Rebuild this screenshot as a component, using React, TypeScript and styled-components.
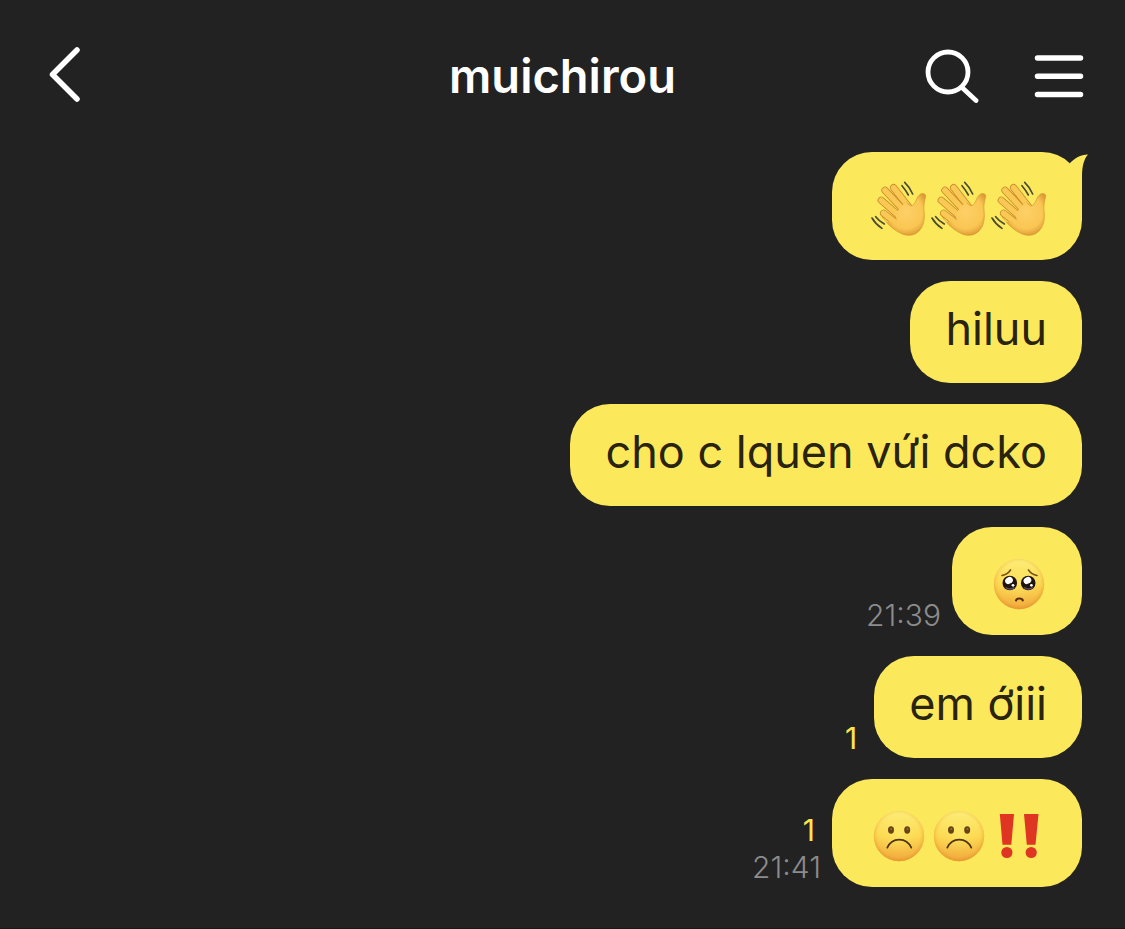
import React from "react";
import styled, { createGlobalStyle } from "styled-components";

const GlobalStyle = createGlobalStyle`
  * { box-sizing: border-box; }
  body { margin: 0; background: #222222; }
`;

const Screen = styled.main`
  min-height: 100vh;
  background: #222222;
  color: #ffffff;
  font-family: Inter, "Liberation Sans", sans-serif;
  border-bottom: 1px solid #1a1718;
`;

const Header = styled.header`
  display: grid;
  grid-template-columns: 1fr auto 1fr;
  align-items: center;
  height: 152px;
  padding: 0 40px;
`;

const Title = styled.h1`
  margin: 0;
  font-size: 47px;
  line-height: 60px;
  font-weight: 600;
`;

const Actions = styled.div`
  display: flex;
  justify-content: flex-end;
  gap: 46px;
`;

const IconButton = styled.button`
  display: block;
  padding: 0;
  border: 0;
  background: none;
  color: #ffffff;
  cursor: pointer;
  justify-self: start;

  svg { display: block; }
`;

const Messages = styled.ol`
  display: flex;
  flex-direction: column;
  gap: 21px;
  margin: 0;
  padding: 0 43px 38px;
  list-style: none;
`;

const Row = styled.li`
  display: flex;
  justify-content: flex-end;
  align-items: flex-end;
  gap: 11px;
`;

const Meta = styled.div`
  display: flex;
  flex-direction: column;
  align-items: flex-end;
  padding-bottom: 1px;
  font-size: 30px;
  line-height: 37px;
  font-weight: 300;
`;

const Unread = styled.span`
  padding-right: 6px;
  color: #fbe54f;
  font-weight: 400;
`;

const Time = styled.time`
  color: #8c8c8c;
`;

const Bubble = styled.div<{ $emoji?: boolean }>`
  position: relative;
  display: flex;
  padding: ${(p) => (p.$emoji ? "24px 35px" : "22px 35px 28px")};
  border-radius: 40px;
  background: #fbe95b;
  color: #29230f;
  font-size: 45px;
  line-height: 52px;
  font-weight: 400;
`;

const Tail = styled.svg`
  position: absolute;
  top: 0;
  right: -6px;
`;

const EmojiSvg = styled.svg`
  display: block;
  width: 60px;
  height: 60px;
`;

const HiddenDefs = styled.svg`
  position: absolute;
`;

const Defs = () => (
  <HiddenDefs width="0" height="0" aria-hidden="true">
    <defs>
      <linearGradient id="face" x1="0" y1="0" x2="0" y2="1">
        <stop offset="0" stopColor="#fdf07c" />
        <stop offset="0.5" stopColor="#fcd951" />
        <stop offset="1" stopColor="#f0a23a" />
      </linearGradient>
      <radialGradient id="shine" cx="0.5" cy="0.47" r="0.54">
        <stop offset="0" stopColor="#fff070" stopOpacity="0.55" />
        <stop offset="0.72" stopColor="#fddf5a" stopOpacity="0.1" />
        <stop offset="0.9" stopColor="#e9a032" stopOpacity="0.4" />
        <stop offset="1" stopColor="#dc8f2a" stopOpacity="0.75" />
      </radialGradient>
      <radialGradient id="palm" gradientUnits="userSpaceOnUse" cx="138" cy="126" r="72">
        <stop offset="0" stopColor="#fdd067" />
        <stop offset="0.7" stopColor="#fac653" />
        <stop offset="1" stopColor="#dd9a35" />
      </radialGradient>
    </defs>
  </HiddenDefs>
);

const fingers = [
  "M101 53L150 116",
  "M75 61L135 125",
  "M64 91L120 140",
  "M71 130L112 162",
];

const Wave = () => (
  <EmojiSvg viewBox="21 18 180 180" role="img" aria-label="👋">
    {fingers.map((d) => (
      <g key={d} fill="none" strokeLinecap="round">
        <path d={d} stroke="#c98a2c" strokeWidth="22" />
        <path d={d} stroke="#fac854" strokeWidth="17" />
      </g>
    ))}
    <path
      d="M110 150L106 132L126 106L140 98C151 110 158 109 163 101C170 91 170 81 179 74C187 68 198 71 197 79C194 93 190 105 192 121C195 150 190 170 177 183C162 198 143 199 125 191C108 184 92 172 78 156Z"
      fill="url(#palm)"
    />
    <path
      d="M140 98C151 110 158 109 163 101C170 91 170 81 179 74C187 68 198 71 197 79C194 93 190 105 192 121C195 150 190 170 177 183C162 198 143 199 125 191C108 184 92 172 66 141"
      fill="none"
      stroke="#d39332"
      strokeWidth="2"
    />
    <path
      d="M126 47Q137 60 145 75M134 37Q149 51 158 72M47 140Q57 153 73 162M36 144Q47 163 66 175"
      fill="none"
      stroke="#4a4a35"
      strokeWidth="5"
      strokeLinecap="round"
    />
  </EmojiSvg>
);

const Face = () => (
  <>
    <circle cx="32" cy="33" r="25.2" fill="url(#face)" />
    <circle cx="32" cy="33" r="25.2" fill="url(#shine)" />
  </>
);

const Frown = () => (
  <EmojiSvg viewBox="0 0 60 60" role="img" aria-label="☹️">
    <Face />
    <ellipse cx="24" cy="27" rx="3" ry="3.7" fill="#674315" />
    <ellipse cx="40.2" cy="27" rx="3" ry="3.7" fill="#674315" />
    <circle cx="24.3" cy="26" r="1" fill="#93703c" />
    <circle cx="40.5" cy="26" r="1" fill="#93703c" />
    <path d="M20.3 44.7C25 33.8 39.5 33.8 44.3 44.7" fill="none" stroke="#4f3410" strokeWidth="1.7" strokeLinecap="round" />
  </EmojiSvg>
);

const Pleading = () => (
  <EmojiSvg viewBox="0 0 60 60" role="img" aria-label="🥺">
    <Face />
    <path d="M15 24.5Q20.5 23.5 23.5 19M41.5 19Q44.5 23.5 50 24.5" fill="none" stroke="#7b4c16" strokeWidth="1.6" strokeLinecap="round" />
    <circle cx="22.8" cy="32" r="7.3" fill="#20140f" />
    <circle cx="41.2" cy="32" r="7.3" fill="#20140f" />
    <path d="M18.5 36.500Q23 39.5 27.5 36.5M37 36.5Q41.5 39.5 46 36.5" fill="none" stroke="#5b5168" strokeWidth="1.3" />
    <ellipse cx="22" cy="29.5" rx="4" ry="3.3" transform="rotate(-30 22 29.5)" fill="#ffffff" />
    <ellipse cx="40.4" cy="29.5" rx="4" ry="3.3" transform="rotate(-30 40.4 29.5)" fill="#ffffff" />
    <circle cx="26" cy="34.3" r="1.4" fill="#ffffff" />
    <circle cx="44.4" cy="34.3" r="1.4" fill="#ffffff" />
    <path d="M29 49.5C29.5 46.8 35.3 46.8 35.8 49.5" fill="none" stroke="#582c0c" strokeWidth="2.1" strokeLinecap="round" />
  </EmojiSvg>
);

const Bangs = () => (
  <EmojiSvg viewBox="0 0 60 60" role="img" aria-label="‼️">
    <path d="M12.8 11H27L24.3 41.8H15.5ZM37 11H51.5L48.5 41.8H39.8Z" fill="#df3523" />
    <circle cx="19.9" cy="49.5" r="5.6" fill="#df3523" />
    <circle cx="44.2" cy="49.5" r="5.6" fill="#df3523" />
  </EmojiSvg>
);

type Message = {
  text?: string;
  emoji?: React.ComponentType[];
  tail?: boolean;
  unread?: number;
  time?: string;
};

const messages: Message[] = [
  { emoji: [Wave, Wave, Wave], tail: true },
  { text: "hiluu" },
  { text: "cho c lquen vứi dcko" },
  { emoji: [Pleading], time: "21:39" },
  { text: "em ớiii", unread: 1 },
  { emoji: [Frown, Frown, Bangs], unread: 1, time: "21:41" },
];

export default function App() {
  return (
    <Screen>
      <GlobalStyle />
      <Defs />
      <Header>
        <IconButton aria-label="Back">
          <svg width="50" height="60" viewBox="0 0 50 60" fill="none" stroke="currentColor" strokeWidth="5.5" strokeLinecap="round" strokeLinejoin="round">
            <path d="M37 4L12.5 28.5L37 53" />
          </svg>
        </IconButton>
        <Title>muichirou</Title>
        <Actions>
          <IconButton aria-label="Search">
            <svg width="60" height="60" viewBox="0 0 60 60" fill="none" stroke="currentColor" strokeWidth="4.8" strokeLinecap="round">
              <circle cx="29" cy="26" r="20" />
              <path d="M43 41.5L57 54.5" />
            </svg>
          </IconButton>
          <IconButton aria-label="Menu">
            <svg width="60" height="60" viewBox="0 0 60 60" fill="none" stroke="currentColor" strokeWidth="5.5" strokeLinecap="round">
              <path d="M12.5 12H55.5M12.5 30.3H55.5M12.5 48.5H55.5" />
            </svg>
          </IconButton>
        </Actions>
      </Header>
      <Messages>
        {messages.map((m, i) => (
          <Row key={i}>
            {(m.unread || m.time) && (
              <Meta>
                {m.unread && <Unread>{m.unread}</Unread>}
                {m.time && <Time>{m.time}</Time>}
              </Meta>
            )}
            <Bubble $emoji={!!m.emoji}>
              {m.text}
              {m.emoji?.map((Emoji, n) => <Emoji key={n} />)}
              {m.tail && (
                <Tail width="26" height="40" viewBox="0 0 26 40" aria-hidden="true">
                  <path d="M6 16L8 11C13 6 18 3 26 2.5C22 7 20 14 20 24V40H10Z" fill="#fbe95b" />
                </Tail>
              )}
            </Bubble>
          </Row>
        ))}
      </Messages>
    </Screen>
  );
}
